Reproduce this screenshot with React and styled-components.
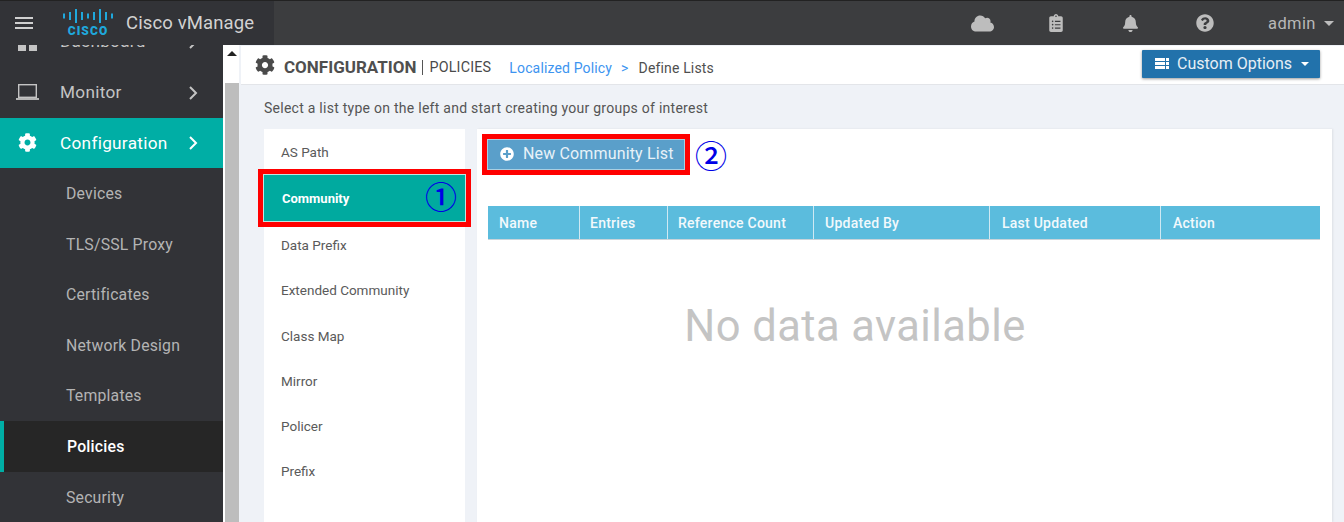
import React from 'react';
import styled, { createGlobalStyle } from 'styled-components';
import { FaCog, FaCloud, FaClipboardList, FaBell, FaQuestionCircle, FaPlusCircle } from 'react-icons/fa';

const Global = createGlobalStyle`
  html, body { margin: 0; padding: 0; height: 100%; overflow: hidden; }
  body { font-family: Roboto, "Liberation Sans", sans-serif; }
  #root { height: 522px; }
`;
const Page = styled.div`width:1344px;height:522px;display:flex;flex-direction:column;overflow:hidden;background:#eff2f7;`;
const Header = styled.header`height:45px;flex:none;display:flex;background:#3c3d3f;border-top:1px solid #222;box-sizing:border-box;position:relative;z-index:2;`;
const Brand = styled.div`width:274px;display:flex;align-items:center;background:#323337;`;
const Burger = styled.div`width:18px;margin-left:15px;display:flex;flex-direction:column;gap:3px;span{height:2px;background:#d0d0d0;}`;
const LogoSvg = styled.svg`margin-left:29px;width:52px;height:30px;flex:none;`;
const BrandName = styled.div`margin-left:12px;font-size:18.5px;color:#d2d2d2;letter-spacing:.12px;`;
const HeaderIcons = styled.div`flex:1;display:flex;align-items:center;justify-content:flex-end;color:#c0c0c0;`;
const HIcon = styled.div`width:24px;margin-left:${p=>p.$ml||0}px;display:flex;justify-content:center;font-size:${p=>p.$s||18}px;color:#bdbdbd;`;
const Admin = styled.div`width:76px;margin-left:51px;display:flex;align-items:center;gap:8px;font-size:16.5px;color:#b8b8b8;letter-spacing:.4px;`;
const Caret = styled.span`width:0;height:0;margin-left:${p=>p.$ml||0}px;border-left:${p=>p.$s||5}px solid transparent;border-right:${p=>p.$s||5}px solid transparent;border-top:${p=>p.$s||5}px solid ${p=>p.$c||'#bdbdbd'};`;
const Body = styled.div`flex:1;display:flex;min-height:0;`;
const Sidebar = styled.nav`width:223px;flex:none;background:#323337;overflow:hidden;`;
const SideInner = styled.div`margin-top:-28px;`;
const SideRow = styled.div`height:50.4px;display:flex;align-items:center;box-sizing:border-box;padding-bottom:${p=>p.$active?0:2}px;color:${p=>p.$active?'#fff':'#c4c4c4'};
  background:${p=>p.$active?'#00aea5':'transparent'};font-size:17.2px;letter-spacing:.3px;position:relative;`;
const SideIcon = styled.span`width:60px;display:flex;justify-content:center;font-size:19px;padding-right:5px;box-sizing:border-box;`;
const Chevron = styled.svg`position:absolute;left:187px;top:50%;transform:translateY(-50%);width:12px;height:16px;`;
const LineIcon = styled.svg`width:23px;height:18px;overflow:visible;`;
const SubRow = styled.div`height:50.6px;display:flex;align-items:center;box-sizing:border-box;padding-left:${p=>p.$active?'63px':'66px'};font-size:15.8px;
  color:${p=>p.$active?'#fff':'#b4b4b4'};font-weight:${p=>p.$active?500:400};background:${p=>p.$active?'#262626':'transparent'};border-left:${p=>p.$active?'4px solid #00aea5':'none'};letter-spacing:.2px;`;
const Scroll = styled.div`width:16px;flex:none;box-sizing:border-box;background:#fff;padding-left:2px;display:flex;flex-direction:column;`;
const ScrollUp = styled.div`height:38px;flex:none;display:flex;justify-content:center;padding-top:6px;box-sizing:border-box;`;
const UpArrow = styled.span`width:0;height:0;border-left:5px solid transparent;border-right:5px solid transparent;border-bottom:5px solid #222;`;
const Thumb = styled.div`flex:1;background:#bdbdbd;`;
const Main = styled.main`flex:1;min-width:0;display:flex;flex-direction:column;padding-left:2px;`;
const TitleBar = styled.div`height:39px;flex:none;margin-top:1px;background:#fff;border-bottom:1px solid #e3e5e9;display:flex;align-items:center;padding:3px 0 0 14px;box-sizing:border-box;position:relative;color:#444;`;
const TitleGear = styled.span`font-size:20px;display:flex;color:#4a4a4a;margin-top:-4px;`;
const Title = styled.span`font-size:17px;font-weight:700;margin-left:9px;color:#4f4f4f;`;
const Sub = styled.span`font-size:14.3px;margin:1px 0 0 6px;padding-left:6px;border-left:1px solid #555;line-height:15px;color:#4a4a4a;letter-spacing:.2px;`;
const Crumb = styled.span`font-size:14px;color:${p=>p.$link?'#3d94f0':'#4f4f4f'};margin:2px 0 0 ${p=>p.$m}px;letter-spacing:.15px;`;
const Options = styled.div`position:absolute;left:901px;top:4px;width:178px;height:28px;background:#2272ab;border-radius:1px;box-shadow:0 1px 3px rgba(0,0,0,.4);color:#e6eef5;display:flex;align-items:center;font-size:16px;padding:0 0 1px 13px;box-sizing:border-box;gap:8px;`;
const ListGlyph = styled.svg`width:14px;height:11px;flex:none;`;
const Hint = styled.div`font-size:14px;color:#555;margin:15px 0 0 23px;letter-spacing:.26px;height:29px;flex:none;`;
const Columns = styled.div`flex:1;display:flex;padding:0 12px 0 23px;gap:12px;min-height:0;`;
const ListPanel = styled.div`width:201px;flex:none;background:#fff;`;
const ListItem = styled.div`height:45.3px;display:flex;align-items:center;box-sizing:border-box;padding-left:17px;font-size:13.5px;color:#5a5a5a;`;
const ActiveItem = styled(ListItem)`height:48px;margin:0 -1px;background:#00aa9f;color:#fff;font-weight:700;font-size:13px;border:1px solid #bfe6e2;box-shadow:0 0 0 5px #f00;padding-left:18px;position:relative;`;
const Num = styled.span`position:absolute;font-family:"Noto Sans CJK JP",sans-serif;font-weight:500;color:#0000e6;font-size:32px;line-height:32px;`;
const ContentPanel = styled.div`flex:1;background:#fff;padding:10px 12px 0 11px;display:flex;flex-direction:column;min-width:0;box-shadow:1px 0 2px rgba(0,0,0,.08);`;
const NewBtn = styled.div`align-self:flex-start;margin-left:-1px;width:198px;height:31px;box-sizing:border-box;background:#5a9fca;border:1px solid #a9cfe2;box-shadow:0 0 0 5px #f00;display:flex;align-items:center;color:#e8f2f8;font-size:16px;padding:0 0 2px 12px;gap:9px;position:relative;letter-spacing:.15px;svg{color:#fff;font-size:14px;}`;
const Table = styled.div`margin-top:36px;display:grid;grid-template-columns:91px 88px 146px 176px 171px 160px;height:34px;background:#5bbcdd;border-bottom:1px solid #c9d4da;box-sizing:border-box;flex:none;`;
const Th = styled.div`color:#f2f9fc;font-size:14px;font-weight:500;display:flex;align-items:center;padding-left:${p=>p.$pl}px;border-left:${p=>p.$first?'none':'1px solid #cfe9f3'};letter-spacing:.25px;`;
const Empty = styled.div`margin:61px 98px 0 0;text-align:center;font-size:43.5px;color:#c4c4c4;letter-spacing:.42px;`;

const bars = [[2,5],[8,8],[14,14],[20,8],[26,5],[32,8],[38,14],[44,8],[50,5]];
const Logo = () => (
  <LogoSvg viewBox="0 0 52 30">
    {bars.map(([x,h],i)=>(
      <rect key={i} x={x-1} y={8-h/2} width="2" height={h} fill="#1fa8dc" />
    ))}
    <text x="26" y="26.5" textAnchor="middle" fontFamily="Roboto, sans-serif" fontWeight="900" fontSize="12" letterSpacing="1.1" fill="#1fa8dc">CISCO</text>
  </LogoSvg>
);
const Chev = () => <Chevron viewBox="0 0 12 16"><polyline points="3,2 9,8 3,14" fill="none" stroke="currentColor" strokeWidth="2"/></Chevron>;
const Laptop = () => (
  <LineIcon viewBox="0 0 23 18">
    <rect x="2.7" y="1.7" width="17.6" height="12.6" fill="none" stroke="currentColor" strokeWidth="1.4"/>
    <line x1="0" y1="16" x2="23" y2="16" stroke="currentColor" strokeWidth="1.8"/>
  </LineIcon>
);
const Grid = () => (
  <LineIcon viewBox="0 0 23 18">
    <rect x="2" y="0" width="8" height="7" fill="currentColor"/>
    <rect x="13" y="0" width="8" height="7" fill="currentColor"/>
    <rect x="2" y="12" width="8" height="7" fill="currentColor"/>
    <rect x="13" y="12" width="8" height="7" fill="currentColor"/>
  </LineIcon>
);
const ListIcon = () => (
  <ListGlyph viewBox="0 0 14 11">
    {[0,4,8].map(y=>(
      <g key={y} fill="#fff">
        <rect x="0" y={y} width="10" height="3"/>
        <rect x="11" y={y} width="3" height="3"/>
      </g>
    ))}
  </ListGlyph>
);

const subs = ['Devices','TLS/SSL Proxy','Certificates','Network Design','Templates','Policies','Security'];
const items = ['Data Prefix','Extended Community','Class Map','Mirror','Policer','Prefix'];
const cols = [['Name',11],['Entries',10],['Reference Count',10],['Updated By',11],['Last Updated',12],['Action',12]];

export default function App(){
  return (
    <Page>
      <Global/>
      <Header>
        <Brand>
          <Burger><span/><span/><span/></Burger>
          <Logo/>
          <BrandName>Cisco vManage</BrandName>
        </Brand>
        <HeaderIcons>
          <HIcon $s={23}><FaCloud/></HIcon>
          <HIcon $s={18} $ml={50}><FaClipboardList/></HIcon>
          <HIcon $s={17} $ml={50}><FaBell/></HIcon>
          <HIcon $s={18} $ml={51}><FaQuestionCircle/></HIcon>
          <Admin>admin<Caret $s={5}/></Admin>
        </HeaderIcons>
      </Header>
      <Body>
        <Sidebar>
          <SideInner>
            <SideRow><SideIcon><Grid/></SideIcon>Dashboard<Chev/></SideRow>
            <SideRow><SideIcon><Laptop/></SideIcon>Monitor<Chev/></SideRow>
            <SideRow $active><SideIcon><FaCog/></SideIcon>Configuration<Chev/></SideRow>
            {subs.map(s=><SubRow key={s} $active={s==='Policies'}>{s}</SubRow>)}
          </SideInner>
        </Sidebar>
        <Scroll>
          <ScrollUp><UpArrow/></ScrollUp>
          <Thumb/>
        </Scroll>
        <Main>
          <TitleBar>
            <TitleGear><FaCog/></TitleGear>
            <Title>CONFIGURATION</Title>
            <Sub>POLICIES</Sub>
            <Crumb $link $m={18}>Localized Policy</Crumb>
            <Crumb $link $m={9}>&gt;</Crumb>
            <Crumb $m={10}>Define Lists</Crumb>
            <Options><ListIcon/>Custom Options<Caret $s={4} $c="#fff" $ml={1}/></Options>
          </TitleBar>
          <Hint>Select a list type on the left and start creating your groups of interest</Hint>
          <Columns>
            <ListPanel>
              <ListItem>AS Path</ListItem>
              <ActiveItem>Community<Num style={{left:161,top:4}}>①</Num></ActiveItem>
              {items.map(i=><ListItem key={i}>{i}</ListItem>)}
            </ListPanel>
            <ContentPanel>
              <NewBtn><FaPlusCircle/>New Community List<Num style={{left:207,top:-2}}>②</Num></NewBtn>
              <Table>{cols.map(([c,pl],i)=><Th key={c} $pl={pl} $first={i===0}>{c}</Th>)}</Table>
              <Empty>No data available</Empty>
            </ContentPanel>
          </Columns>
        </Main>
      </Body>
    </Page>
  );
}
